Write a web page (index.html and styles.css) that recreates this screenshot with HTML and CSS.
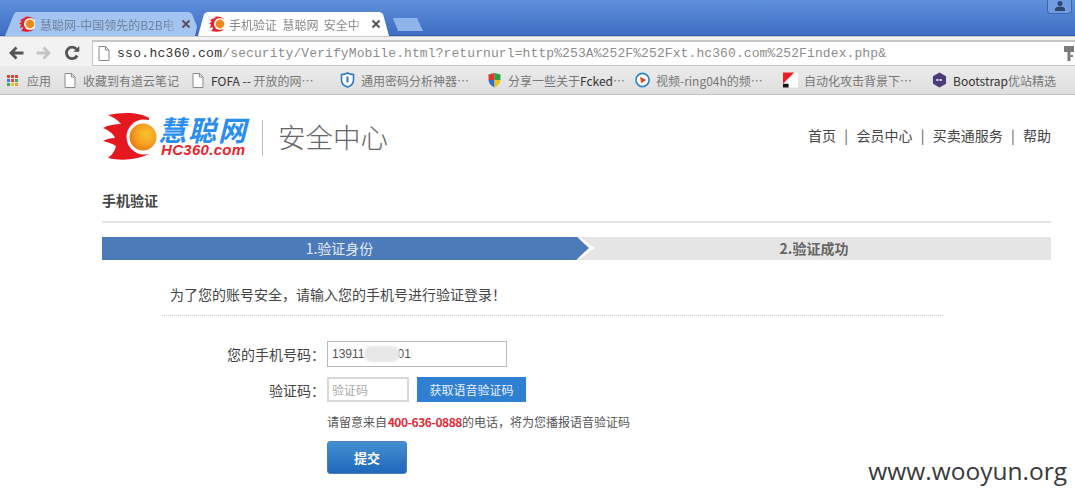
FILE: index.html
```html
<!DOCTYPE html>
<html lang="zh">
<head>
<meta charset="utf-8">
<title>手机验证</title>
<link rel="stylesheet" href="styles.css">
</head>
<body>
<div class="chrome">
  <div class="tabbar">
    <div class="tab tab-off">
      <svg class="favicon" viewBox="0 0 16 16"><path d="M15 3C12 0 7 0 5 1l2 1C4 2 2 3 1 5h2L0 8h2L1 12l3-1c0 2-1 3-2 4 5 1 10 1 12-1z" fill="#e8202a"/><circle cx="11" cy="8" r="6" fill="#fff"/><circle cx="11" cy="8" r="4.400" fill="#f08a1d"/></svg>
      <span class="tab-title">慧聪网-中国领先的B2B电</span>
      <svg class="tab-x" viewBox="0 0 10 10"><path d="M1.500 1.500l7 7M8.500 1.500l-7 7" stroke="#555" stroke-width="2"/></svg>
    </div>
    <div class="tab tab-on">
      <svg class="favicon" viewBox="0 0 16 16"><path d="M15 3C12 0 7 0 5 1l2 1C4 2 2 3 1 5h2L0 8h2L1 12l3-1c0 2-1 3-2 4 5 1 10 1 12-1z" fill="#e8202a"/><circle cx="11" cy="8" r="6" fill="#fff"/><circle cx="11" cy="8" r="4.400" fill="#f08a1d"/></svg>
      <span class="tab-title">手机验证&nbsp; 慧聪网&nbsp; 安全中</span>
      <svg class="tab-x" viewBox="0 0 10 10"><path d="M1.500 1.500l7 7M8.500 1.500l-7 7" stroke="#555" stroke-width="2"/></svg>
    </div>
    <div class="tab-new"></div>
    <div class="profile">
      <svg viewBox="0 0 12 12" width="12" height="12"><circle cx="6" cy="3.500" r="2.500" fill="#31466e"/><path d="M1 11V9c0-1.500 2-2.500 5-2.500s5 1 5 2.500v2z" fill="#31466e"/></svg>
    </div>
  </div>
  <div class="toolbar">
    <svg class="nav-ic" viewBox="0 0 16 16"><path d="M15.500 8H4M8.500 2.500 3 8l5.500 5.500" fill="none" stroke="#555" stroke-width="2.800"/></svg>
    <svg class="nav-ic" viewBox="0 0 16 16"><path d="M.5 8H12M7.500 2.500 13 8l-5.500 5.500" fill="none" stroke="#c4c4c4" stroke-width="2.800"/></svg>
    <svg class="nav-ic" viewBox="0 0 16 16"><path d="M13.200 10.500A5.700 5.700 0 1 1 12.500 4.200" fill="none" stroke="#555" stroke-width="2.800"/><path d="M9.500 6.800h5.800V1z" fill="#555"/></svg>
    <div class="omnibox">
      <svg class="page-ic" viewBox="0 0 12 15"><path d="M1 .5h6.500L11 4v10.500H1z" fill="#fff" stroke="#8a8a8a"/><path d="M7.500.5V4H11" fill="none" stroke="#8a8a8a"/></svg>
      <span class="url"><span class="url-host">sso.hc360.com</span>/security/VerifyMobile.html?returnurl=http%253A%252F%252Fxt.hc360.com%252Findex.php&amp;</span>
      <svg class="key-ic" viewBox="0 0 10 15"><path d="M0 0h10v6H6.500v9h-3V6H0z" fill="#7b7b7b"/><path d="M6.500 9H9v2H6.500z" fill="#7b7b7b"/></svg>
    </div>
  </div>
  <div class="bookmarks">
    <div class="bm bm-apps"><span class="apps"><i class="a1"></i><i class="a2"></i><i class="a3"></i><i class="a4"></i><i class="a5"></i><i class="a6"></i><i class="a7"></i><i class="a8"></i><i class="a9"></i></span><span>应用</span></div>
    <div class="bm bm-2"><svg class="bm-page" viewBox="0 0 12 15"><path d="M1 .5h6.500L11 4v10.500H1z" fill="#fff" stroke="#8a8a8a"/><path d="M7.500.5V4H11" fill="none" stroke="#8a8a8a"/></svg><span>收藏到有道云笔记</span></div>
    <div class="bm bm-3"><svg class="bm-page" viewBox="0 0 12 15"><path d="M1 .5h6.500L11 4v10.500H1z" fill="#fff" stroke="#8a8a8a"/><path d="M7.500.5V4H11" fill="none" stroke="#8a8a8a"/></svg><span><span class="bm-dark">FOFA -- </span>开放的网…</span></div>
    <div class="bm bm-4"><svg class="bm-ic" viewBox="0 0 14 16"><path d="M7 1c2 1 4 1.500 6 1.500V8c0 3.500-3 6-6 7-3-1-6-3.500-6-7V2.500C3 2.500 5 2 7 1z" fill="#fff" stroke="#2e78c0" stroke-width="1.600"/><path d="M6 4.500h2v6H6z" fill="#2e78c0"/></svg><span>通用密码分析神器…</span></div>
    <div class="bm bm-5"><svg class="bm-ic" viewBox="0 0 14 16"><path d="M1 2.500 7 1v7H1z" fill="#d93a2b"/><path d="M7 1l6 1.500V8H7z" fill="#2f9e44"/><path d="M1 8h6v7.500C4 14 1.500 12 1 8z" fill="#2f6fd0"/><path d="M7 8h6c-.5 4-3 6-6 7.500z" fill="#f2c21a"/></svg><span>分享一些关于<span class="bm-dark">Fcked</span>…</span></div>
    <div class="bm bm-6"><svg class="bm-ic" viewBox="0 0 16 16"><circle cx="8" cy="8" r="7" fill="#fff" stroke="#2b86d6" stroke-width="1.800"/><path d="M5.500 4.500 12 8l-5.500 3.500z" fill="#e8452a"/></svg><span>视频-ring04h的频…</span></div>
    <div class="bm bm-7"><svg class="bm-ic" viewBox="0 0 16 16"><path d="M0 0h16v16H0z" fill="#fff"/><path d="M0 0h12L0 12z" fill="#ee1c25"/><path d="M0 12h6v4H0z" fill="#111"/></svg><span>自动化攻击背景下…</span></div>
    <div class="bm bm-8"><svg class="bm-ic" viewBox="0 0 16 16"><path d="M8 0l7 4v8l-7 4-7-4V4z" fill="#4b3c78"/><path d="M4.500 8h7" stroke="#fff" stroke-width="1.500" stroke-dasharray="2.500 1"/></svg><span><span class="bm-dark">Bootstrap</span>优站精选</span></div>
  </div>
</div>
<div class="page">
  <header class="head">
    <div class="logo">
      <svg class="logo-mark" viewBox="0 0 54 48"><defs><radialGradient id="sun" cx=".62" cy=".4" r=".65"><stop offset="0" stop-color="#f9c22e"/><stop offset=".55" stop-color="#f6a323"/><stop offset="1" stop-color="#ea7a14"/></radialGradient></defs><path d="M46 5C36-1 20-1 5 2c5 2 10 5 13 9-6 0-13 1-18 4 5 2 10 5 12 10-4 0-9 1-12 3 5 1 10 3 13 5-1 5-4 9-8 12 13 3 29 2 41-4 3-8 3-28 0-36z" fill="#e5171f"/><circle cx="41" cy="24" r="17.500" fill="#fff"/><path d="M46 0h8v48h-8z" fill="#fff"/><circle cx="40" cy="24" r="13.500" fill="url(#sun)"/></svg>
      <div class="logo-words"><div class="logo-cn">慧聪网</div><div class="logo-en">HC360.com</div></div>
      <div class="logo-sep"></div>
      <div class="logo-sub">安全中心</div>
    </div>
    <nav class="topnav"><a>首页</a><i>|</i><a>会员中心</a><i>|</i><a>买卖通服务</a><i>|</i><a>帮助</a></nav>
  </header>
  <h1 class="title">手机验证</h1>
  <div class="steps">
    <div class="step step-on">1.验证身份</div>
    <div class="step step-off">2.验证成功</div>
  </div>
  <p class="intro">为了您的账号安全，请输入您的手机号进行验证登录！</p>
  <form class="form">
    <div class="row">
      <label class="lab">您的手机号码：</label>
      <div class="field field-phone">13911<span class="blur"></span>01</div>
    </div>
    <div class="row row-code">
      <label class="lab">验证码：</label>
      <div class="field field-code">验证码</div>
      <div class="getcode">获取语音验证码</div>
    </div>
    <p class="note">请留意来自 <b>400-636-0888</b>的电话，将为您播报语音验证码</p>
    <div class="submit">提交</div>
  </form>
</div>
<div class="mark">www.wooyun.org</div>
</body>
</html>
```

FILE: styles.css
```css
* { box-sizing: border-box; }
html, body { margin: 0; height: 499px; overflow: hidden; background: #fff; }
body { position: relative; font-family: "Noto Sans CJK SC", "Liberation Sans", sans-serif; color: #444; }

.chrome { height: 95px; display: flex; flex-direction: column; }
.tabbar { height: 36px; display: flex; align-items: flex-end; padding-left: 5px; background: linear-gradient(#5f90dc, #3e6dc2); border-bottom: 1px solid #355fa8; position: relative; }
.tab { height: 24px; display: flex; align-items: center; font-size: 12px; margin-bottom: -1px; flex: none; }
.tab-off { width: 193px; padding: 0 7px 0 14px; background: #a3c4f0; color: #71819b; clip-path: polygon(0 100%, 9px 2px, 11px 0, 184px 0, 187px 2px, 192px 60%, 190px 100%); }
.tab-on { width: 197px; padding: 0 11px 0 14px; margin-left: -3px; background: #fff; color: #888; clip-path: polygon(0 100%, 3px 100%, 9px 2px, 12px 0, 185px 0, 188px 2px, 194px 100%, 197px 100%); }
.tab-title { flex: 1; min-width: 0; white-space: nowrap; margin-left: 4px; -webkit-mask-image: linear-gradient(90deg, #000 calc(100% - 18px), rgba(0, 0, 0, .25) calc(100% - 6px)); mask-image: linear-gradient(90deg, #000 calc(100% - 18px), rgba(0, 0, 0, .25) calc(100% - 6px)); }
.tab-off .tab-title { margin-left: 5px; }
.tab-x { width: 10px; height: 10px; flex: none; }
.tab-new { width: 30px; height: 13px; margin: 0 0 4px 1px; background: #8fb4ea; clip-path: polygon(0 0, 24px 0, 30px 100%, 5px 100%); flex: none; }
.favicon { width: 16px; height: 16px; flex: none; }
.profile { position: absolute; right: 3px; top: -1px; width: 25px; height: 15px; border: 1px solid #3f66a9; border-top: 0; border-radius: 0 0 4px 4px; background: #6f9ce0; display: flex; align-items: center; justify-content: center; }

.toolbar { height: 30px; background: #f2f2f2; border-top: 1px solid #c9c9c9; display: flex; align-items: flex-end; padding-left: 8px; }
.nav-ic { width: 16px; height: 16px; margin: 0 12px 5px 0; flex: none; }
.omnibox { flex: 1; height: 26px; background: #fff; border: 1px solid #c6c6c6; border-right: 0; border-top: 2px solid #c6c6c6; display: flex; align-items: center; padding-left: 5px; position: relative; }
.page-ic { width: 12px; height: 15px; flex: none; margin-right: 7px; }
.url { font: 13px "Liberation Mono", monospace; letter-spacing: .1px; color: #8c8c8c; white-space: nowrap; }
.url-host { color: #333; letter-spacing: .3px; }
.key-ic { position: absolute; right: 1px; top: 4px; width: 10px; height: 15px; }

.bookmarks { height: 29px; background: linear-gradient(#ececec, #dedede); border-bottom: 1px solid #c4c4c4; display: flex; align-items: center; padding-left: 7px; font-size: 12px; color: #777; }
.bm { display: flex; align-items: center; white-space: nowrap; flex: none; }
.bm-dark { color: #333; }
.bm-apps { width: 57px; }
.bm-2 { width: 128px; }
.bm-3 { width: 148px; }
.bm-4 { width: 147px; }
.bm-5 { width: 148px; }
.bm-6 { width: 148px; }
.bm-7 { width: 149px; }
.apps { display: grid; grid-template-columns: repeat(3, 3px); grid-auto-rows: 3px; gap: 1px; margin-right: 9px; }
.apps i { display: block; }
.a1 { background: #e3423a; } .a2 { background: #e3423a; } .a3 { background: #e3423a; }
.a4 { background: #3a7de3; } .a5 { background: #e3423a; } .a6 { background: #3fa85a; }
.a7 { background: #3fa85a; } .a8 { background: #e8c43a; } .a9 { background: #e8a33a; }
.bm-page { width: 12px; height: 15px; margin-right: 7px; flex: none; }
.bm-ic { width: 15px; height: 16px; margin-right: 6px; flex: none; }

.page { width: 949px; margin-left: 102px; display: flex; flex-direction: column; }
.head { height: 81px; display: flex; justify-content: space-between; align-items: flex-start; padding-top: 18px; }
.logo { display: flex; align-items: flex-start; margin-left: 1px; }
.logo-mark { width: 54px; height: 48px; flex: none; }
.logo-words { margin-left: 4px; width: 90px; }
.logo-cn { font-size: 28px; line-height: 27px; font-weight: 700; font-style: italic; color: #2a8df0; letter-spacing: 2px; margin: 3px 0 0 -3px; white-space: nowrap; }
.logo-en { font: italic 700 15px/14px "Liberation Sans", sans-serif; color: #e5262e; letter-spacing: .3px; }
.logo-sep { width: 1px; height: 36px; background: #bbb; margin: 7px 15px 0 11px; }
.logo-sub { font-size: 27.5px; line-height: 46px; color: #666; font-weight: 300; }
.topnav { display: flex; font-size: 14px; line-height: 20px; color: #444; padding-top: 12px; }
.topnav i { font-style: normal; width: 20.3px; text-align: center; color: #555; }

.title { margin: 0; height: 47px; font-size: 14px; line-height: 49px; font-weight: 700; color: #444; border-bottom: 2px solid #e4e4e4; }
.steps { display: flex; margin-top: 14px; height: 23px; background: #e5e5e5; }
.step { font-size: 14px; line-height: 23px; text-align: center; }
.step-on { flex: none; width: 475px; background: #4d7ab8; color: #e4ecf7; position: relative; }
.step-on::before { content: ""; position: absolute; left: 100%; top: 0; border-left: 14px solid #fff; border-top: 11.5px solid transparent; border-bottom: 11.5px solid transparent; margin-left: 3px; }
.step-on::after { content: ""; position: absolute; left: 100%; top: 0; border-left: 12px solid #4d7ab8; border-top: 11.5px solid transparent; border-bottom: 11.5px solid transparent; }
.step-off { flex: 1; color: #666; font-weight: 700; }

.intro { margin: 0 0 0 60px; width: 781px; height: 56px; padding: 24px 0 0 8px; font-size: 14px; line-height: 20px; color: #444; border-bottom: 1px dotted #c8c8c8; }
.form { display: flex; flex-direction: column; }
.row { display: flex; align-items: center; margin-top: 25px; height: 26px; }
.row-code { margin-top: 10px; height: 25px; }
.lab { width: 223px; margin-right: 2px; font-size: 14px; text-align: right; color: #444; }
.field { height: 100%; border: 1px solid #bbb; font: 12px/24px "Liberation Sans", sans-serif; color: #555; padding-left: 4px; }
.field-phone { width: 180px; display: flex; align-items: center; }
.blur { display: block; width: 36px; height: 16px; margin-right: -3px; background: #e7e7e7; border-radius: 8px; filter: blur(1px); position: relative; }
.field-code { width: 82px; border: 2px solid #d8d8d8; font-family: "Noto Sans CJK SC", sans-serif; color: #aaa; padding-left: 3px; line-height: 21px; }
.getcode { width: 109px; height: 100%; margin-left: 8px; background: #2f7fd3; color: #e8f1fb; font-size: 12px; line-height: 25px; text-align: center; }
.note { margin: 10px 0 0 225px; font-size: 12px; line-height: 20px; color: #555; word-spacing: -2px; }
.note b { color: #e02a36; letter-spacing: -.45px; }
.submit { width: 80px; height: 33px; margin: 9px 0 0 225px; border: 1px solid #4d7fb8; border-radius: 3px; background: linear-gradient(#4390d2, #2067bb); color: #fff; font-size: 13px; font-weight: 700; line-height: 31px; text-align: center; }

.mark { position: absolute; right: 8px; top: 456px; font: 24.500px/30px "Open Sans", sans-serif; color: #3a3a3a; }
```
